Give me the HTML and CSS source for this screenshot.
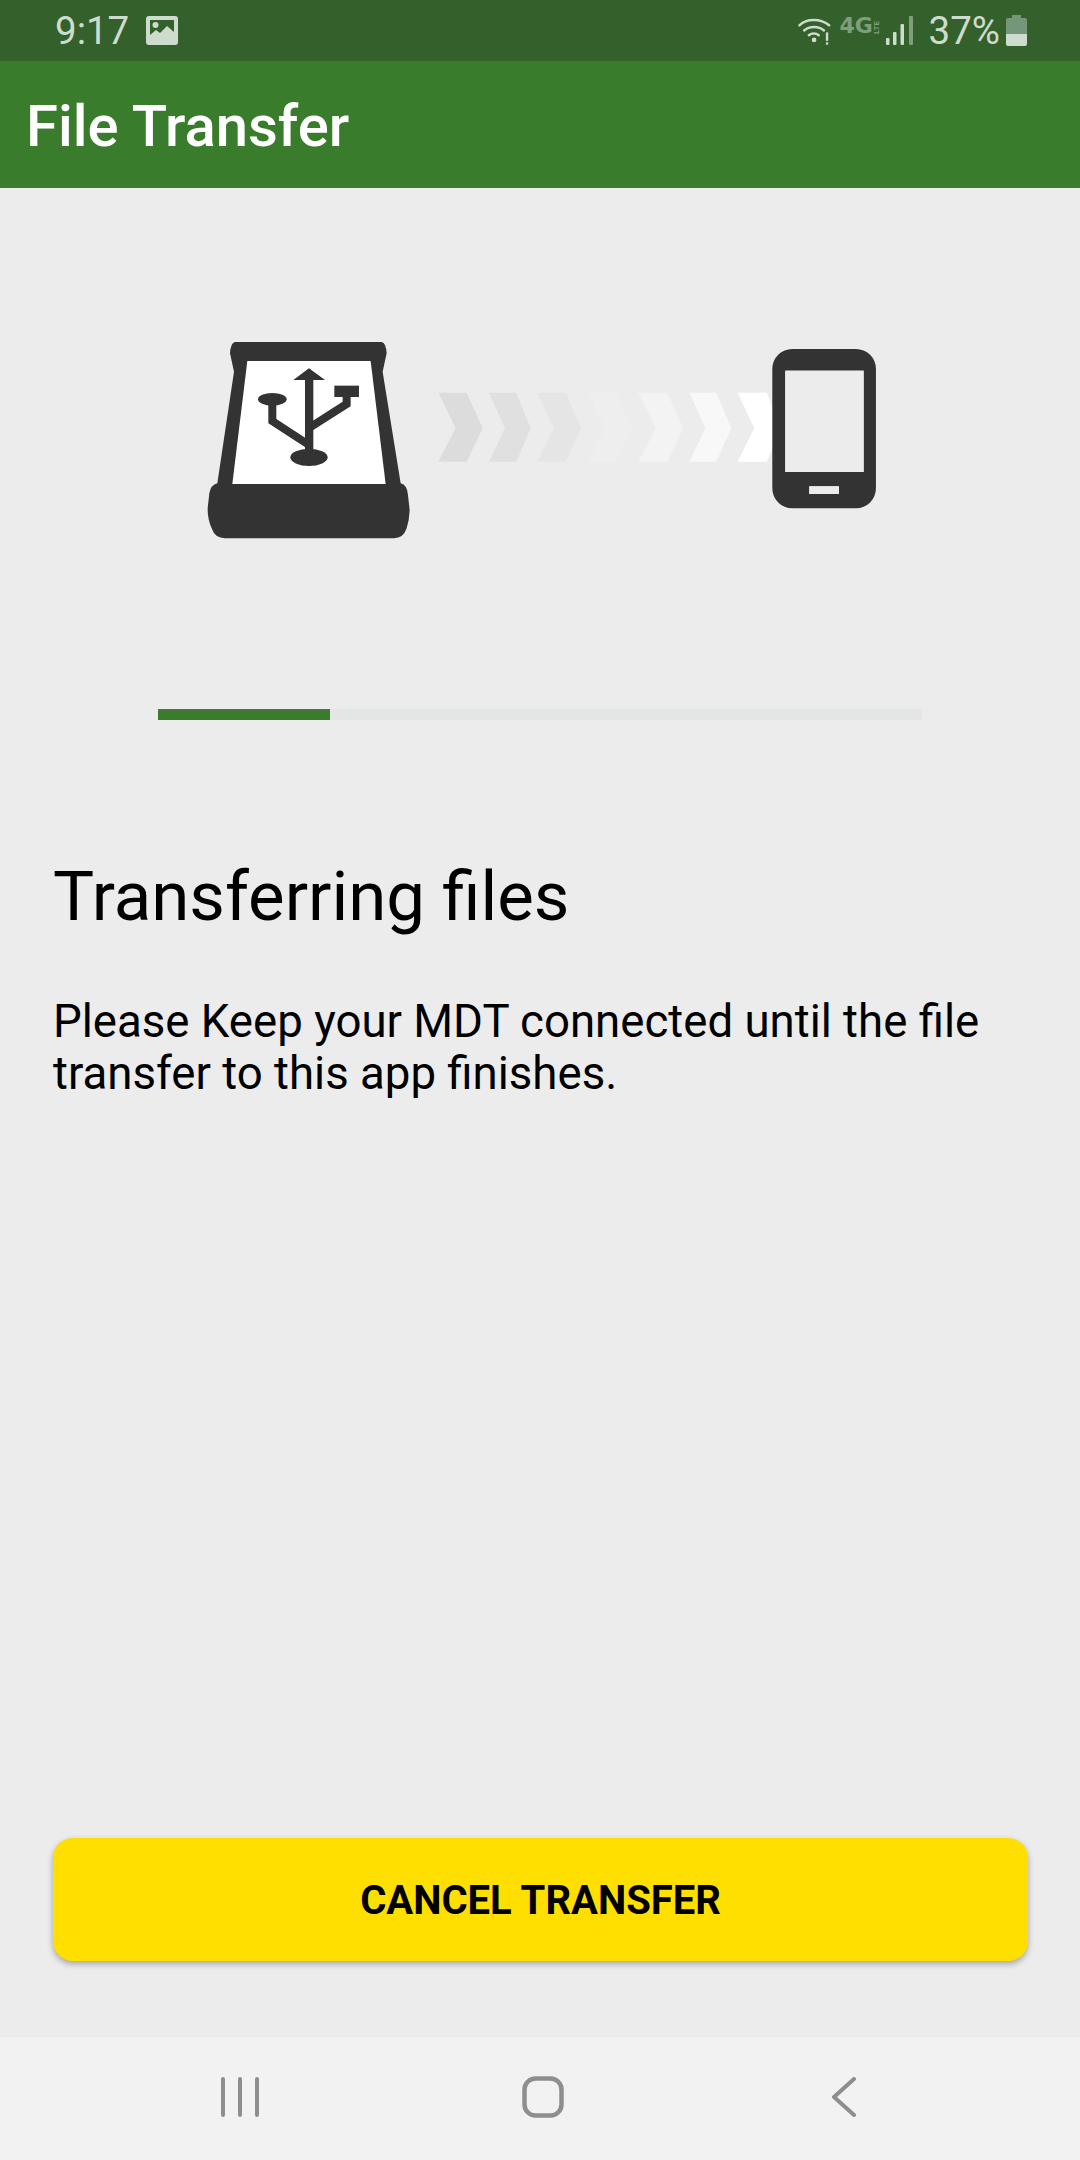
FILE: index.html
```html
<!DOCTYPE html>
<html lang="en">

<head>
    <meta charset="UTF-8">
    <meta name="viewport" content="width=device-width, initial-scale=1.0">
    <title>File Transfer</title>
    <link rel="stylesheet" href="styles.css">
</head>

<body>
    <div id="screen">
        <div id="statusBar">
            <div class="status-left">
                <span class="clock">9:17</span>
                <svg class="picture-icon" width="33" height="29" viewBox="0 0 33 29">
                    <path fill-rule="evenodd" d="M3 0h26a3 3 0 0 1 3 3v23a3 3 0 0 1-3 3H3a3 3 0 0 1-3-3V3a3 3 0 0 1 3-3zM4 4v15l6-5 4 3 7-7 7 6V4z" fill="#cddccd"/>
                    <circle cx="9.500" cy="9" r="3" fill="#cddccd"/>
                </svg>
            </div>
            <div class="status-right">
                <svg class="wifi-icon" width="34" height="29" viewBox="0 0 36 30">
                    <g fill="none" stroke="#cddccd" stroke-width="2.6" stroke-linecap="round">
                        <path d="M1.500 9.500C9 2 24 2 33 9.500"/>
                        <path d="M6.500 15C12 10 22 10 27.500 15"/>
                        <path d="M11.500 20C14.500 17.500 19 17.500 22 20"/>
                    </g>
                    <circle cx="17" cy="25" r="2.500" fill="#cddccd"/>
                    <rect x="29.500" y="17" width="2.500" height="9" fill="#cddccd"/>
                    <rect x="29.500" y="27.500" width="2.500" height="2.500" fill="#cddccd"/>
                </svg>
                <div class="network">
                    <span class="network-g">4G</span>
                    <span class="network-lte">LTE</span>
                </div>
                <svg class="signal-icon" width="27" height="29" viewBox="0 0 27 29">
                    <rect x="0" y="22" width="3.500" height="7" rx="1" fill="#cddccd"/>
                    <rect x="7" y="16" width="3.500" height="13" rx="1" fill="#cddccd"/>
                    <rect x="14.500" y="8" width="3.500" height="21" rx="1" fill="#cddccd"/>
                    <rect x="23" y="0" width="4" height="29" rx="1" fill="#7f9e7a"/>
                </svg>
                <span class="battery-text">37%</span>
                <svg class="battery-icon" width="21" height="31" viewBox="0 0 21 31">
                    <path d="M6 0h9v3h4a2 2 0 0 1 2 2v14H0V5a2 2 0 0 1 2-2h4z" fill="#76967a"/>
                    <path d="M0 19h21v10a2 2 0 0 1-2 2H2a2 2 0 0 1-2-2z" fill="#cddccd"/>
                </svg>
            </div>
        </div>

        <div id="appBar">
            <h1>File Transfer</h1>
        </div>

        <div id="content">
            <div class="graphic">
                <svg width="700" height="230" viewBox="0 0 700 230">
                    <!-- usb drive -->
                    <g transform="scale(0.3333)">
                        <path d="M135 66H575Q588 68 590 100L578 155 632 490Q652 495 654 525L659 570Q658 600 650 625 640 655 612 655H105Q75 655 65 625 52 595 53 565L58 520Q62 495 82 490L132 155 120 100Q122 68 135 66Z" fill="#333"/>
                        <path d="M172 123H542L587 492H127Z" fill="#fff"/>
                        <path d="M345 180H310L357 145 405 180H370V395H345Z" fill="#333"/>
                        <ellipse cx="247" cy="238" rx="43" ry="19" fill="#333"/>
                        <ellipse cx="357" cy="412" rx="56" ry="26" fill="#333"/>
                        <rect x="433" y="197" width="74" height="34" fill="#333"/>
                        <path d="M247 245V303L357 375M470 225V252L360 322" fill="none" stroke="#333" stroke-width="24"/>
                    </g>
                    <!-- arrows -->
                    <g transform="translate(230 10) scale(0.3333)">
                        <path d="M55 188H140L188 295 140 395H55L107 295Z" fill="#dcdcdc"/>
                        <path d="M207 188H289L332 295 289 395H207L255 295Z" fill="#e0e0e0"/>
                        <path d="M352 188H437L484 295 437 395H352L402 295Z" fill="#e5e5e5"/>
                        <path d="M505 188H588L636 295 588 395H505L555 295Z" fill="#eeeeee"/>
                        <path d="M655 188H742L790 295 742 395H655L707 295Z" fill="#f3f3f3"/>
                        <path d="M808 188H889L934 295 889 395H808L856 295Z" fill="#f8f8f8"/>
                        <path d="M953 188H1040L1085 295 1040 395H953L1003 295Z" fill="#fff"/>
                    </g>
                    <!-- phone -->
                    <g transform="translate(230 10) scale(0.3333)">
                        <path fill-rule="evenodd" d="M1117 57H1308A60 60 0 0 1 1368 117V475A60 60 0 0 1 1308 535H1117A60 60 0 0 1 1057 475V117A60 60 0 0 1 1117 57ZM1096 122V426H1331V122ZM1168 469V492H1257V469Z" fill="#333"/>
                        <rect x="1096" y="122" width="235" height="304" fill="#ececec"/>
                        <rect x="1168" y="469" width="89" height="23" fill="#ececec"/>
                    </g>
                </svg>
            </div>

            <div class="progress">
                <div class="progress-fill" style="width:172px"></div>
            </div>

            <h2>Transferring files</h2>
            <p class="description">Please Keep your MDT connected until the file transfer to this app finishes.</p>

            <button id="cancelBtn">CANCEL TRANSFER</button>
        </div>

        <div id="navBar">
            <svg width="40" height="40" viewBox="0 0 40 40">
                <g stroke="#8e8e8e" stroke-width="4" stroke-linecap="round">
                    <path d="M3 2V38M20 2V38M37 2V38"/>
                </g>
            </svg>
            <svg class="nav-home" width="42" height="42" viewBox="0 0 42 42">
                <rect x="2.500" y="2.500" width="37" height="37" rx="11" fill="none" stroke="#8e8e8e" stroke-width="4.500"/>
            </svg>
            <svg width="26" height="40" viewBox="0 0 26 40">
                <path d="M23 2L3 20 23 38" fill="none" stroke="#8e8e8e" stroke-width="4" stroke-linecap="round" stroke-linejoin="round"/>
            </svg>
        </div>
    </div>
</body>

</html>
```

FILE: styles.css
```css
body {
    font-family: Roboto, 'Liberation Sans', sans-serif;
    margin: 0;
    background: #ececec;
    color: #000;
}

#screen {
    width: 1080px;
    height: 2160px;
    display: flex;
    flex-direction: column;
    overflow: hidden;
}

#statusBar {
    height: 61px;
    background: #34602c;
    color: #cddccd;
    display: flex;
    align-items: center;
    justify-content: space-between;
    padding: 0 53px 0 55px;
    font-size: 38.5px;
}

.status-left,
.status-right {
    display: flex;
    align-items: center;
}

.picture-icon {
    margin-left: 17px;
}

.network {
    display: flex;
    align-items: flex-start;
    width: 39px;
    height: 29px;
    margin: 0 7px 0 8px;
    color: #7f9e7a;
}

.network-g {
    font-family: 'DejaVu Sans', sans-serif;
    font-size: 22px;
    font-weight: 700;
    line-height: 20px;
}

.network-lte {
    font-size: 8px;
    font-weight: 700;
    line-height: 8px;
    writing-mode: vertical-rl;
    transform: rotate(180deg);
    height: 18px;
}

.battery-text {
    margin: 0 6px 0 16px;
}

#appBar {
    height: 125px;
    padding: 2px 0 0 26px;
    background: #397d2c;
    display: flex;
    align-items: center;
}

#appBar h1 {
    margin: 0;
    color: #fff;
    font-size: 58px;
    font-weight: 500;
}

#content {
    flex: 1;
    display: flex;
    flex-direction: column;
    padding: 0 52px 76px 53px;
}

.graphic {
    display: flex;
    justify-content: center;
    margin-top: 132px;
}

.graphic svg {
    margin-right: 2px;
}

.progress {
    width: 764px;
    height: 11px;
    margin: 159px 0 0 105px;
    background: #e4e5e5;
}

.progress-fill {
    height: 100%;
    background: #397d2c;
    box-shadow: inset 0 2px 0 #4b7343;
}

h2 {
    margin: 137px 0 0;
    font-size: 69px;
    font-weight: 400;
    line-height: 80px;
}

.description {
    margin: 59px 0 0;
    font-size: 45.6px;
    line-height: 52px;
}

#cancelBtn {
    margin-top: auto;
    height: 123px;
    padding: 2px 0 0;
    border: none;
    border-radius: 20px;
    background: #ffdf00;
    color: #000;
    font-family: inherit;
    font-size: 40px;
    font-weight: 700;
    box-shadow: 0 3px 6px rgba(0, 0, 0, 0.3);
}

#navBar {
    height: 119px;
    padding: 0 223px 4px 220px;
    background: #f2f2f2;
    display: flex;
    align-items: center;
    justify-content: space-between;
}

.nav-home {
    margin-right: 6px;
}
```
